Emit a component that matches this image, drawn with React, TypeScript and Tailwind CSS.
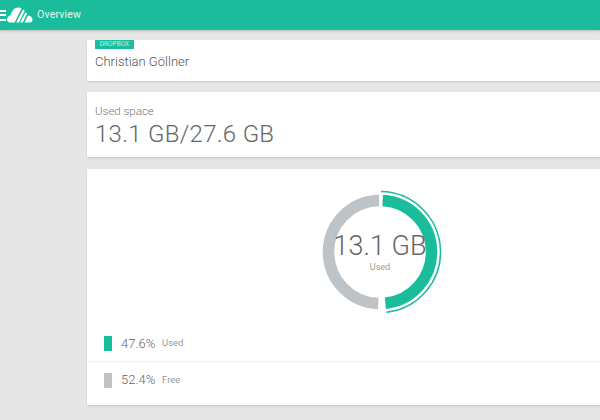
const polar = (r: number, deg: number) => {
  const a = ((deg - 90) * Math.PI) / 180;
  return `${(64 + r * Math.cos(a)).toFixed(2)} ${(64 + r * Math.sin(a)).toFixed(2)}`;
};

const arc = (r: number, from: number, to: number) =>
  `M${polar(r, from)} A${r} ${r} 0 ${to - from > 180 ? 1 : 0} 1 ${polar(r, to)}`;

function Logo() {
  return (
    <svg width="26" height="16" viewBox="0 0 26 16" fill="#fff" className="ml-[1px]">
      <path d="M0 12.5C0 10 2 8.6 3.6 8.4 4.6 4 7.600 0.500 11.500 0.500 12.800 0.500 13.800 0.800 14.600 1.400L7.600 15.500H3.200C1.300 15.500 0 14.300 0 12.500Z" />
      <path d="M16 2.500 17.700 3.700 12 15.500H9.200Z" />
      <path d="M18.500 5.200 20 6.800 15.700 15.500H13.200Z" />
      <path d="M21 8.600C23.500 8.800 25.500 10.400 25.500 12.800 25.500 14.500 24.300 15.500 22.800 15.500H17.600Z" />
    </svg>
  );
}

function Donut() {
  return (
    <div className="relative w-[128px] h-[128px]">
      <svg width="128" height="128" viewBox="0 0 128 128" fill="none">
        <path d={arc(51.5, 182, 359)} stroke="#bdc3c7" strokeWidth="11.500" />
        <path d={arc(51.5, 3, 174)} stroke="#1abc9c" strokeWidth="11.500" />
        <path d={arc(60.5, 1, 174)} stroke="#1abc9c" strokeWidth="1.500" />
      </svg>
      <div className="absolute inset-0 flex flex-col items-center justify-center text-[#666]">
        <div className="text-[27px] leading-[30px] font-light mt-[-1px]">13.1 GB</div>
        <div className="text-[9px] leading-[12px] text-[#999]">Used</div>
      </div>
    </div>
  );
}

function LegendRow({ color, value, label, border }: { color: string; value: string; label: string; border?: boolean }) {
  return (
    <div className={`flex items-center h-[36px] pl-[17px] ${border ? 'border-b border-[#eeeeee]' : ''}`}>
      <div className={`w-[8px] h-[15px] ${color}`} />
      <span className="ml-[9px] text-[13px] font-light text-[#666] w-[41px]">{value}</span>
      <span className="text-[9.500px] text-[#999]">{label}</span>
    </div>
  );
}

export default function App() {
  return (
    <div className="w-[600px] h-[420px] overflow-hidden bg-[#e6e6e6] font-['Roboto',sans-serif]">
      <header className="h-[30px] bg-[#1abc9c] flex items-center shadow-[0_1px_3px_rgba(0,0,0,0.2)] relative">
        <div className="flex flex-col gap-[2.500px] w-[6px] overflow-hidden">
          <div className="h-[2px] bg-white" />
          <div className="h-[2px] bg-white" />
          <div className="h-[2px] bg-white" />
        </div>
        <Logo />
        <span className="ml-[4px] text-[10.500px] text-[#e4f7f3] tracking-[0.2px]">Overview</span>
      </header>

      <main className="ml-[87px] w-[560px] pt-[10px] flex flex-col">
        <section className="h-[41px] bg-white shadow-[0_1px_2px_rgba(0,0,0,0.15)] pl-[8px]">
          <div className="w-[39px] h-[9px] bg-[#1abc9c] text-[6.500px] leading-[9px] text-[#c8f0e6] text-center">DROPBOX</div>
          <div className="mt-[4px] text-[13px] leading-[18px] font-light text-[#555]">Christian Göllner</div>
        </section>

        <section className="mt-[11px] h-[65px] bg-white shadow-[0_1px_2px_rgba(0,0,0,0.15)] pl-[8px] pt-[12px]">
          <div className="text-[11.500px] leading-[14px] font-light text-[#777]">Used space</div>
          <div className="mt-[2px] text-[24px] leading-[28px] font-light text-[#666] tracking-[0.3px]">13.1 GB/27.6 GB</div>
        </section>

        <section className="mt-[12px] h-[236px] bg-white shadow-[0_1px_2px_rgba(0,0,0,0.15)] flex flex-col">
          <div className="flex-1 pl-[229px] pt-[19px]">
            <Donut />
          </div>
          <div className="pb-[7px]">
            <LegendRow color="bg-[#1abc9c]" value="47.6%" label="Used" border />
            <LegendRow color="bg-[#bdc3c7]" value="52.4%" label="Free" />
          </div>
        </section>
      </main>
    </div>
  );
}
